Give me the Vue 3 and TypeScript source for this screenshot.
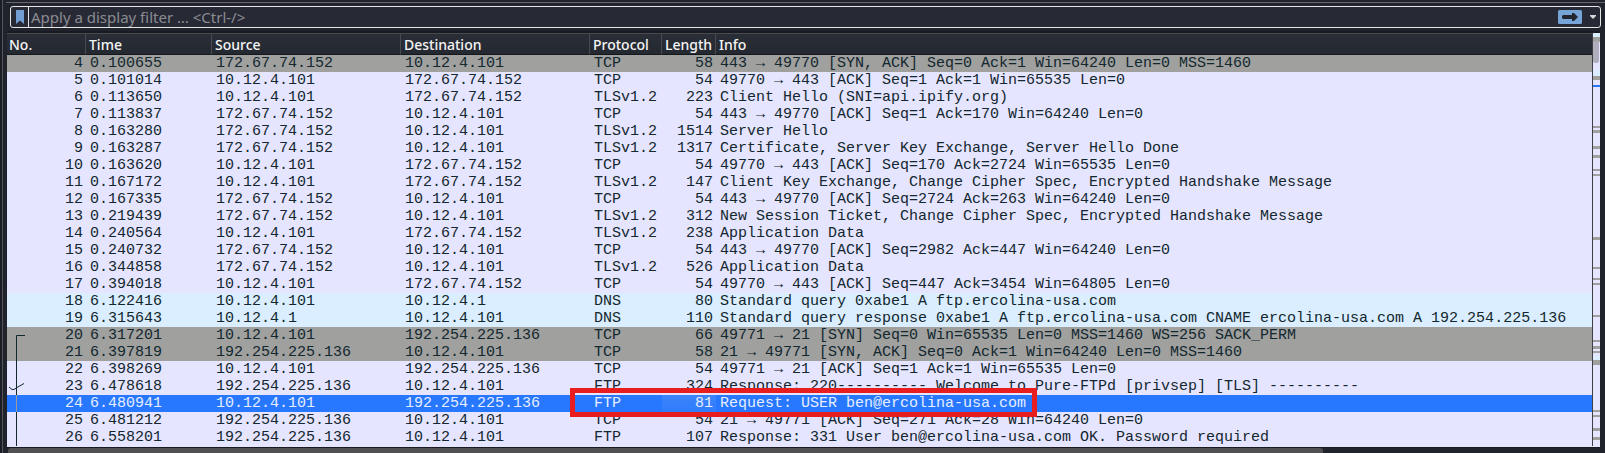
<script setup lang="ts">
import { ref } from 'vue'

type Tone = 'tcp' | 'syn' | 'dns' | 'selected'
type Trace = 'start' | 'line' | 'check'

interface Packet {
  no: number
  time: string
  source: string
  destination: string
  protocol: string
  length: number
  info: string
  tone: Tone
  trace?: Trace
}

const host = '10.12.4.101'
const api = '172.67.74.152'
const ftp = '192.254.225.136'
const dns = '10.12.4.1'

function packet(
  no: number, time: string, source: string, destination: string, protocol: string,
  length: number, info: string, tone: Tone = 'tcp', trace?: Trace,
): Packet {
  return { no, time, source, destination, protocol, length, info, tone, trace }
}

const packets: Packet[] = [
  packet(4, '0.100655', api, host, 'TCP', 58, '443 → 49770 [SYN, ACK] Seq=0 Ack=1 Win=64240 Len=0 MSS=1460', 'syn'),
  packet(5, '0.101014', host, api, 'TCP', 54, '49770 → 443 [ACK] Seq=1 Ack=1 Win=65535 Len=0'),
  packet(6, '0.113650', host, api, 'TLSv1.2', 223, 'Client Hello (SNI=api.ipify.org)'),
  packet(7, '0.113837', api, host, 'TCP', 54, '443 → 49770 [ACK] Seq=1 Ack=170 Win=64240 Len=0'),
  packet(8, '0.163280', api, host, 'TLSv1.2', 1514, 'Server Hello'),
  packet(9, '0.163287', api, host, 'TLSv1.2', 1317, 'Certificate, Server Key Exchange, Server Hello Done'),
  packet(10, '0.163620', host, api, 'TCP', 54, '49770 → 443 [ACK] Seq=170 Ack=2724 Win=65535 Len=0'),
  packet(11, '0.167172', host, api, 'TLSv1.2', 147, 'Client Key Exchange, Change Cipher Spec, Encrypted Handshake Message'),
  packet(12, '0.167335', api, host, 'TCP', 54, '443 → 49770 [ACK] Seq=2724 Ack=263 Win=64240 Len=0'),
  packet(13, '0.219439', api, host, 'TLSv1.2', 312, 'New Session Ticket, Change Cipher Spec, Encrypted Handshake Message'),
  packet(14, '0.240564', host, api, 'TLSv1.2', 238, 'Application Data'),
  packet(15, '0.240732', api, host, 'TCP', 54, '443 → 49770 [ACK] Seq=2982 Ack=447 Win=64240 Len=0'),
  packet(16, '0.344858', api, host, 'TLSv1.2', 526, 'Application Data'),
  packet(17, '0.394018', host, api, 'TCP', 54, '49770 → 443 [ACK] Seq=447 Ack=3454 Win=64805 Len=0'),
  packet(18, '6.122416', host, dns, 'DNS', 80, 'Standard query 0xabe1 A ftp.ercolina-usa.com', 'dns'),
  packet(19, '6.315643', dns, host, 'DNS', 110, 'Standard query response 0xabe1 A ftp.ercolina-usa.com CNAME ercolina-usa.com A 192.254.225.136', 'dns'),
  packet(20, '6.317201', host, ftp, 'TCP', 66, '49771 → 21 [SYN] Seq=0 Win=65535 Len=0 MSS=1460 WS=256 SACK_PERM', 'syn', 'start'),
  packet(21, '6.397819', ftp, host, 'TCP', 58, '21 → 49771 [SYN, ACK] Seq=0 Ack=1 Win=64240 Len=0 MSS=1460', 'syn', 'line'),
  packet(22, '6.398269', host, ftp, 'TCP', 54, '49771 → 21 [ACK] Seq=1 Ack=1 Win=65535 Len=0', 'tcp', 'line'),
  packet(23, '6.478618', ftp, host, 'FTP', 324, 'Response: 220---------- Welcome to Pure-FTPd [privsep] [TLS] ----------', 'tcp', 'check'),
  packet(24, '6.480941', host, ftp, 'FTP', 81, 'Request: USER ben@ercolina-usa.com', 'selected', 'line'),
  packet(25, '6.481212', ftp, host, 'TCP', 54, '21 → 49771 [ACK] Seq=271 Ack=28 Win=64240 Len=0', 'tcp', 'line'),
  packet(26, '6.558201', ftp, host, 'FTP', 107, 'Response: 331 User ben@ercolina-usa.com OK. Password required', 'tcp', 'line'),
]

// Overview strip marks: [top, height, tone]
const marks: [number, number, Tone][] = [
  [0, 4, 'dns'], [4, 5, 'syn'], [37, 6, 'dns'], [43, 4, 'syn'], [52, 2, 'selected'],
  [93, 2, 'syn'], [97, 3, 'syn'], [113, 3, 'syn'], [122, 3, 'syn'], [136, 2, 'syn'],
  [141, 2, 'syn'], [204, 3, 'syn'], [234, 2, 'syn'], [245, 2, 'syn'], [250, 2, 'syn'],
  [282, 2, 'syn'], [307, 2, 'syn'], [313, 3, 'syn'], [318, 2, 'syn'], [323, 4, 'dns'],
  [327, 5, 'syn'], [377, 2, 'syn'], [382, 2, 'syn'], [395, 3, 'syn'], [404, 3, 'syn'],
]

const tracePaths: Record<Trace, string> = {
  start: 'M18 8.5H9.5V17',
  line: 'M9.5 0V17',
  check: 'M9.5 0V17',
}

const filter = ref('')
</script>

<template>
  <main class="window">
    <form class="filter" @submit.prevent>
      <button class="bookmark" type="button" aria-label="Filter bookmarks">
        <svg width="8" height="14" viewBox="0 0 8 14"><path d="M0 0H8V14L4 10.5L0 14Z" fill="#729fd3" /></svg>
      </button>
      <input v-model="filter" class="query" type="text" aria-label="Display filter" placeholder="Apply a display filter … &lt;Ctrl-/&gt;" />
      <button class="apply" type="submit" aria-label="Apply filter">
        <svg width="24" height="14" viewBox="0 0 24 14">
          <rect width="24" height="14" rx="1.5" fill="#76a4d6" />
          <path d="M5 5H14V3H16L20 7L16 11H14V9H5L4 8V6Z" fill="#23262f" />
        </svg>
      </button>
      <button class="history" type="button" aria-label="Recent filters">
        <svg width="6" height="4" viewBox="0 0 6 4"><path d="M0 0H6V1L3 4L0 1Z" fill="#d6d6d6" /></svg>
      </button>
    </form>

    <section class="panel">
      <table class="packets">
        <colgroup>
          <col class="c-no" /><col class="c-time" /><col class="c-addr" /><col class="c-addr" />
          <col class="c-proto" /><col class="c-len" /><col />
        </colgroup>
        <thead>
          <tr>
            <th>No.</th><th>Time</th><th>Source</th><th>Destination</th>
            <th>Protocol</th><th>Length</th><th>Info</th>
          </tr>
        </thead>
        <tbody>
          <tr v-for="p in packets" :key="p.no" :class="p.tone">
            <td class="num">
              <svg v-if="p.trace" class="trace" width="20" height="17" viewBox="0 0 20 17">
                <path :d="tracePaths[p.trace]" />
                <path v-if="p.trace === 'check'" d="M2 9L5 11.5H7L10 9.5L17 5.5" />
              </svg>{{ p.no }}
            </td>
            <td>{{ p.time }}</td>
            <td>{{ p.source }}</td>
            <td>{{ p.destination }}</td>
            <td class="proto">{{ p.protocol }}<span v-if="p.tone === 'selected'" class="callout"></span></td>
            <td class="num len">{{ p.length }}</td>
            <td>{{ p.info }}</td>
          </tr>
        </tbody>
      </table>
      <svg class="overview" width="7" height="413" viewBox="0 0 7 413">
        <rect v-for="([top, height, tone]) in marks" :key="top" :class="tone" :y="top" width="7" :height="height" />
        <rect class="thumb" y="8" width="6" height="22" rx="2" />
      </svg>
    </section>
    <div class="hscroll"><div class="hthumb"></div></div>
  </main>
</template>

<style>
body {
  margin: 0;
  background: #20232c;
}
</style>

<style scoped>
.window {
  padding: 2px 4px 0 4px;
  border-left: 2px solid #1b1d26;
  box-shadow: inset 1px 0 #55555a;
  background: #20222c;
  overflow: hidden;
}

.window::before {
  content: '';
  display: block;
  height: 1px;
  margin: 0 -4px -1px 0;
  background: #66666e;
}

.filter {
  display: flex;
  align-items: center;
  box-sizing: border-box;
  height: 22px;
  margin: 4px 0 5px 4px;
  border: 1px solid #e6e6e6;
  border-radius: 3px;
  background: #272935;
}

button {
  display: flex;
  align-items: center;
  justify-content: center;
  height: 20px;
  padding: 0;
  border: 0;
  background: none;
}

.bookmark {
  width: 18px;
  border-right: 1px solid #e6e6e6;
}

.query {
  flex: 1;
  min-width: 0;
  height: 20px;
  padding: 0 2px;
  border: 0;
  outline: 0;
  background: transparent;
  color: #eeeeee;
  font: 15px/20px "Noto Sans", sans-serif;
}

.query::placeholder {
  color: #8b8c92;
  opacity: 1;
}

.apply {
  width: 24px;
}

.history {
  width: 18px;
  padding-left: 4px;
}

.panel {
  display: flex;
  align-items: flex-start;
  margin: 0 1px;
  padding-bottom: 1px;
  background: #e6e5ff;
  box-shadow: 0 -2px #191b22;
}

.packets {
  flex: 1;
  min-width: 0;
  table-layout: fixed;
  border-collapse: separate;
  border-spacing: 0;
  border-right: 1px solid #3e4045;
  color: #12272e;
  font: 15px/17px "Liberation Mono", monospace;
}

.c-no { width: 79px; }
.c-time { width: 126px; }
.c-addr { width: 189px; }
.c-proto { width: 72px; }
.c-len { width: 54px; }

th {
  box-sizing: border-box;
  height: 22px;
  padding: 2px 0 0 3px;
  border-top: 1px solid #484a4e;
  border-right: 1px solid #484b52;
  border-bottom: 1px solid #14171c;
  background: linear-gradient(#2a2f37, #242931);
  color: #f5f5f5;
  font: 500 14px/18px "Noto Sans", sans-serif;
  text-align: left;
  white-space: nowrap;
}

th:first-child {
  padding-left: 2px;
}

th:last-child {
  border-right: 0;
}

td {
  height: 17px;
  padding: 0 0 0 4px;
  white-space: nowrap;
}

.num {
  position: relative;
  padding: 0 3px 0 0;
  text-align: right;
}

.proto {
  position: relative;
}

tr.syn { background: #a0a09f; }
tr.dns { background: #daeeff; }
tr.selected { background: #2878ff; color: #e6eeff; }

.selected .len {
  background: linear-gradient(#3c84fb, #2f7dfd);
}

.trace {
  position: absolute;
  left: 0;
  top: 0;
  fill: none;
  stroke: #12272e;
}

.selected .trace {
  stroke: #9b9b9f;
}

.callout {
  position: absolute;
  z-index: 1;
  left: -20px;
  top: -7px;
  box-sizing: border-box;
  width: 467px;
  height: 29px;
  border: 5px solid #e71d1f;
  pointer-events: none;
}

.overview {
  display: block;
}

.overview .syn { fill: #a0a09f; }
.overview .dns { fill: #daeeff; }
.overview .selected { fill: #2878ff; }
.overview .thumb { fill: #b0aebd; }

.hscroll {
  height: 6px;
  margin-left: 1px;
  border-top: 1px solid #181a20;
  box-sizing: border-box;
  background: #20222c;
}

.hthumb {
  width: 82.5%;
  height: 5px;
  margin-left: 1px;
  border-radius: 3px 3px 0 0;
  background: #505052;
}
</style>
